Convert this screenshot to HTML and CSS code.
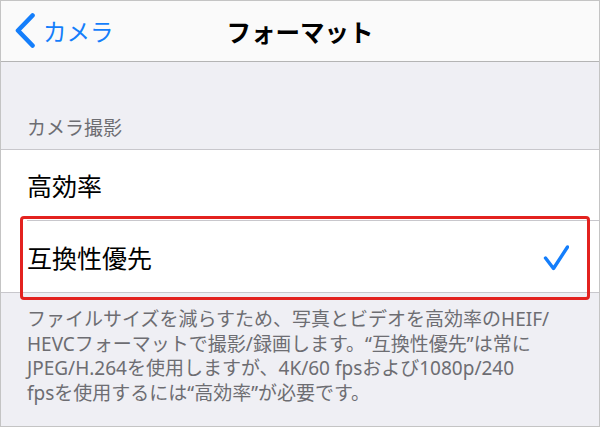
FILE: index.html
```html
<!DOCTYPE html>
<html lang="ja">
<head>
    <meta charset="UTF-8">
    <meta name="viewport" content="width=device-width, initial-scale=1.0">
    <title>フォーマット</title>
    <link rel="stylesheet" href="styles.css">
</head>
<body>
    <div class="screen">
        <!-- barra de navegacion -->
        <div class="navbar">
            <a class="back" href="#">
                <svg class="chevron" width="22" height="36" viewBox="0 0 22 36">
                    <polyline points="17.5,2.5 3,17.5 17.5,32.5" fill="none" stroke="#147efb" stroke-width="4.6" stroke-linecap="round" stroke-linejoin="round"/>
                </svg>
                <span>カメラ</span>
            </a>
            <div class="title">フォーマット</div>
            <div></div>
        </div>

        <div class="section-header">カメラ撮影</div>

        <div class="list">
            <div class="option">高効率</div>
            <div class="option selected">
                <span>互換性優先</span>
                <svg class="check" width="26" height="26" viewBox="0 0 26 26">
                    <polyline points="2.5,13 10.5,23.5 24.5,2" fill="none" stroke="#147efb" stroke-width="3.4" stroke-linecap="round" stroke-linejoin="round"/>
                </svg>
            </div>
        </div>

        <p class="footer">
            ファイルサイズを減らすため、写真とビデオを高効率のHEIF/<br>
            HEVCフォーマットで撮影/録画します。“互換性優先”は常に<br>
            JPEG/H.264を使用しますが、4K/60 fpsおよび1080p/240<br>
            fpsを使用するには“高効率”が必要です。
        </p>

        <div class="highlight"></div>
    </div>
</body>
</html>
```

FILE: styles.css
```css
body {
    margin: 0;
    background-color: #ffffff;
    font-family: "Noto Sans", "Noto Sans CJK JP", sans-serif;
}
.screen {
    position: relative;
    width: 600px;
    height: 427px;
    box-sizing: border-box;
    border: 1px solid #c4c4c4;
    background-color: #efeff4;
    overflow: hidden;
}
.navbar {
    display: grid;
    grid-template-columns: 1fr auto 1fr;
    align-items: center;
    height: 60px;
    background-color: #fafafa;
    border-bottom: 1px solid #b4b4b4;
}
.back {
    display: flex;
    align-items: center;
    gap: 6px;
    padding-left: 14px;
    color: #147efb;
    font-size: 23.5px;
    text-decoration: none;
}
.title {
    font-size: 24.5px;
    font-weight: bold;
    color: #000000;
}
.section-header {
    display: flex;
    align-items: flex-end;
    height: 87px;
    box-sizing: border-box;
    padding: 0 26px 11px;
    font-size: 19px;
    line-height: 1;
    color: #6d6d72;
}
.list {
    background-color: #ffffff;
    border-top: 1px solid #c8c7cc;
    border-bottom: 1px solid #c8c7cc;
    padding-left: 26px;
}
.option {
    display: flex;
    align-items: center;
    justify-content: space-between;
    height: 70px;
    padding-right: 30px;
    font-size: 25px;
    color: #000000;
}
.option + .option {
    height: 71px;
    border-top: 1px solid #c8c7cc;
}
.check {
    margin-top: 2px;
}
.footer {
    margin: 0;
    padding: 14px 26px 0;
    font-size: 19px;
    line-height: 24.5px;
    color: #6d6d72;
}
.highlight {
    position: absolute;
    left: 19px;
    top: 215px;
    width: 570px;
    height: 84px;
    box-sizing: border-box;
    border: 3px solid #e3221f;
    border-radius: 4px;
}
```
